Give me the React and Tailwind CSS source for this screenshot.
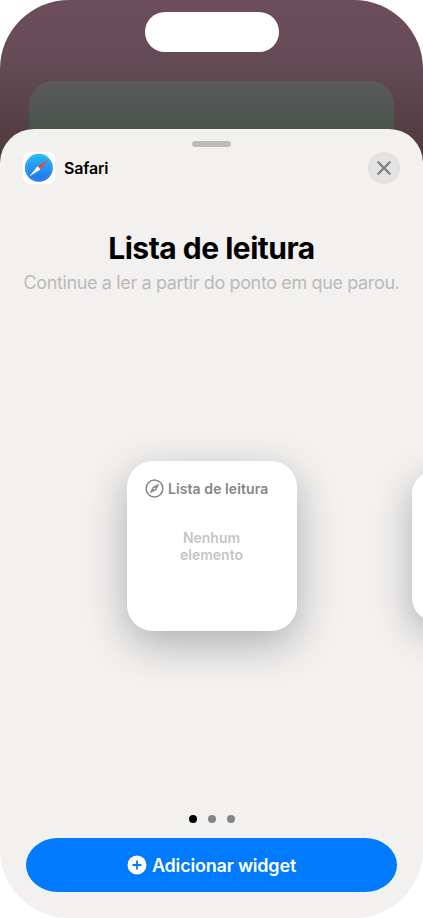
import React from 'react';

const SafariIcon = () => (
    <svg viewBox="0 0 32 32" className="w-8 h-8 shrink-0">
        <defs>
            <linearGradient id="safariBlue" x1="0" y1="0" x2="0" y2="1">
                <stop offset="0" stopColor="#25bdf5" />
                <stop offset="1" stopColor="#2070ee" />
            </linearGradient>
        </defs>
        <rect width="32" height="32" rx="7" fill="#fff" />
        <circle cx="15.9" cy="15.8" r="14" fill="url(#safariBlue)" />
        <circle cx="15.9" cy="15.8" r="12.4" fill="none" stroke="#a5dcfb" strokeOpacity="0.5" strokeWidth="1" strokeDasharray="0.5 0.8" />
        <path d="M25.8 7.2 L14.6 14.2 L17.4 17.4 Z" fill="#dd4d50" />
        <path d="M6.2 24.4 L14.6 14.2 L17.4 17.4 Z" fill="#fff" />
    </svg>
);

const CompassIcon = () => (
    <svg viewBox="0 0 19 19" className="w-[19px] h-[19px] shrink-0" fill="none">
        <circle cx="9.5" cy="9.5" r="8.4" stroke="#868686" strokeWidth="1.5" />
        <path fillRule="evenodd" d="M14 4.9 L11.2 11.1 L5 14 L7.8 7.9 Z M9.5 8.4 a1.15 1.15 0 1 0 0 2.3 a1.15 1.15 0 1 0 0 -2.3 Z" fill="#868686" stroke="#868686" strokeWidth="0.4" strokeLinejoin="round" />
    </svg>
);

const SheetHeader = () => (
    <div className="flex items-center px-[23px] mt-[5px]">
        <SafariIcon />
        <span className="ml-[9px] text-base font-semibold tracking-[-0.2px] text-black">Safari</span>
        <button aria-label="Fechar" className="ml-auto w-8 h-8 rounded-full bg-[#e3e2e1] flex items-center justify-center">
            <svg viewBox="0 0 14 14" className="w-3.5 h-3.5" stroke="#7c7b80" strokeWidth="2.2" strokeLinecap="round">
                <path d="M1.3 1.3 L12.7 12.7 M12.7 1.3 L1.3 12.7" />
            </svg>
        </button>
    </div>
);

const WidgetCarousel = () => (
    <div className="flex items-center mt-[164px] pl-[127px]">
        <div className="w-[170px] h-[170px] shrink-0 rounded-[26px] bg-white shadow-[0_13px_42px_rgba(0,0,0,0.28)] pt-[18px]">
            <div className="flex items-center pl-[18px]">
                <CompassIcon />
                <span className="ml-1 text-sm leading-[19px] font-semibold tracking-[0.08px] text-[#868686] whitespace-nowrap">Lista de leitura</span>
            </div>
            <p className="mt-[31px] pr-px text-center text-sm leading-[17px] font-semibold text-[#c5c5c7]">
                Nenhum <br /> elemento
            </p>
        </div>
        <div className="ml-[115px] w-[150px] h-[150px] shrink-0 rounded-[23px] bg-white shadow-[0_12px_38px_rgba(0,0,0,0.28)]"></div>
    </div>
);

const App = () => {
    return (
        <div className="w-[423px] h-[918px] bg-white overflow-hidden font-['Inter','Liberation_Sans',sans-serif]">
            <div className="w-full h-full rounded-[69px] overflow-hidden flex flex-col bg-[linear-gradient(#6c4d5b_0px,#674c57_50px,#5e4750_85px,#574046_120px,#4c393b_165px,#f2f1f0_300px)]">
                {/* Dynamic island */}
                <div className="mt-3 mx-auto w-[134px] h-10 shrink-0 rounded-full bg-white"></div>

                {/* Home screen widget behind the sheet */}
                <div className="mt-[29px] mx-[29px] h-[60px] -mb-3 shrink-0 rounded-t-[24px] bg-[linear-gradient(#5a5b5b,#4b534d_48px)]"></div>

                <div className="relative flex-1 min-h-0 flex flex-col overflow-hidden rounded-t-[34px] bg-[#f2f1f0]">
                    <div className="mt-3 mx-auto w-[39px] h-[6px] shrink-0 rounded-full bg-[#bcbbba]"></div>
                    <SheetHeader />

                    <div className="mt-[46px] text-center whitespace-nowrap">
                        <h1 className="text-[30px] leading-9 font-bold tracking-[-0.5px] text-black">Lista de leitura</h1>
                        <p className="mt-[3px] text-lg leading-7 text-[#bbbab9] tracking-[-0.37px]">Continue a ler a partir do ponto em que parou.</p>
                    </div>

                    <WidgetCarousel />

                    <div className="mt-auto flex justify-center gap-[11px]">
                        <span className="w-2 h-2 rounded-full bg-black"></span>
                        <span className="w-2 h-2 rounded-full bg-[#858488]"></span>
                        <span className="w-2 h-2 rounded-full bg-[#858488]"></span>
                    </div>

                    <button className="mt-[15px] mb-[26px] mx-[26px] h-[54px] shrink-0 rounded-[32px/27px] bg-[#007aff] text-white flex items-center justify-center">
                        <svg viewBox="0 0 20 20" className="w-5 h-5">
                            <circle cx="10" cy="10" r="9.5" fill="#fff" />
                            <path d="M10 6.2 V13.8 M6.2 10 H13.8" stroke="#007aff" strokeWidth="1.8" strokeLinecap="round" />
                        </svg>
                        <span className="ml-[5px] pt-0.5 text-lg font-semibold tracking-[-0.2px]">Adicionar widget</span>
                    </button>
                </div>
            </div>
        </div>
    );
};

export default App;
